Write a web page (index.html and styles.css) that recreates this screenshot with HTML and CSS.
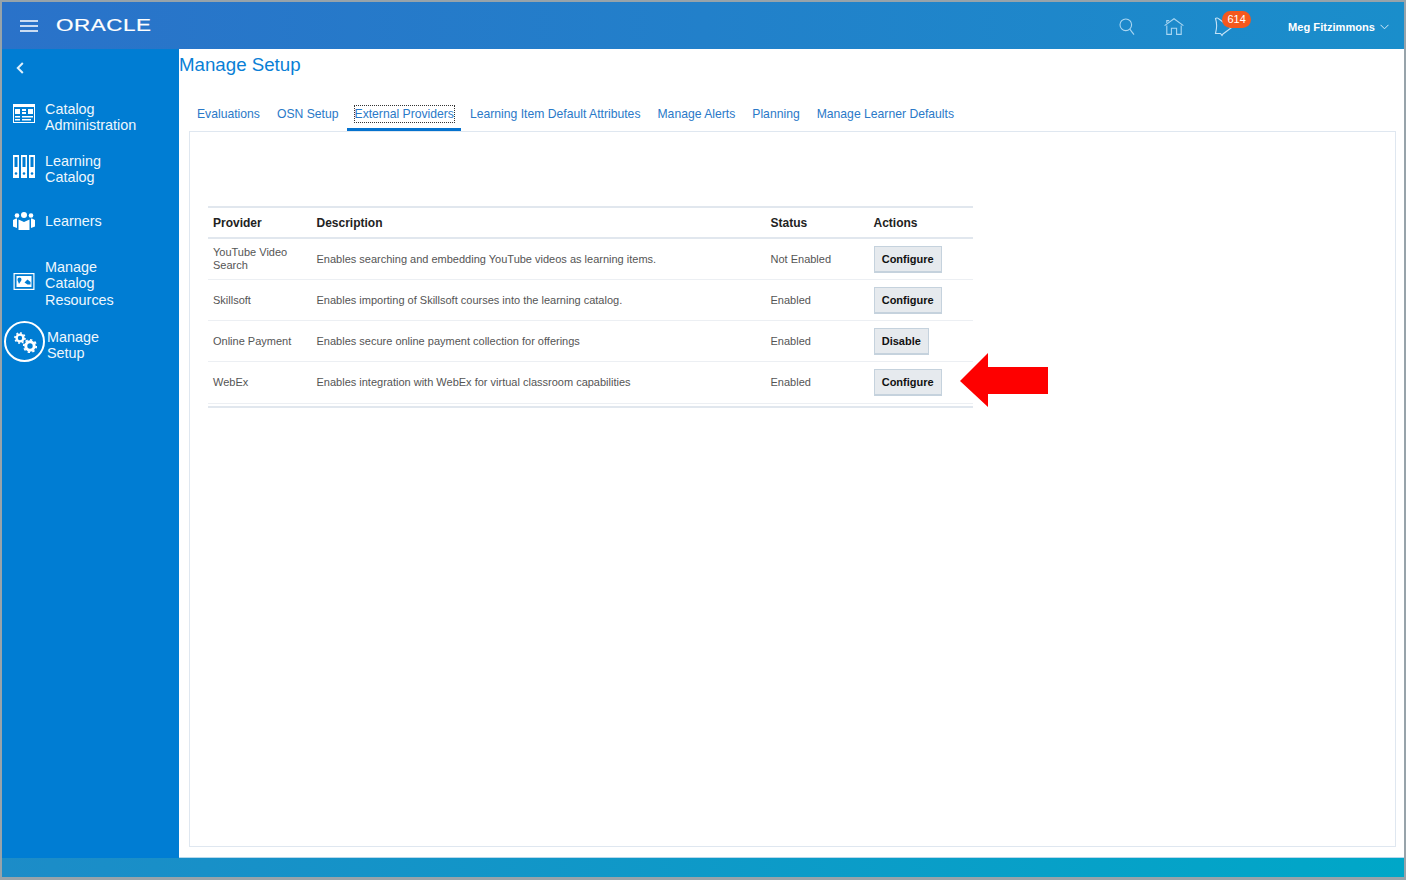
FILE: index.html
```html
<!DOCTYPE html>
<html lang="en">
<head>
<meta charset="utf-8">
<title>Manage Setup</title>
<link rel="stylesheet" href="styles.css">
</head>
<body>
<div class="frame">
  <header class="topbar">
    <svg class="hamburger" width="18" height="12" viewBox="0 0 18 12"><path d="M0 1h18M0 6h18M0 11h18" stroke="#fff" stroke-width="1.6" fill="none"/></svg>
    <span class="logo"><span class="logo-text">ORACLE</span></span>
    <div class="top-right">
      <svg class="ic-search" width="16" height="18" viewBox="0 0 16 18" fill="none" stroke="#a9d6f2" stroke-width="1.1"><circle cx="6.8" cy="6.8" r="5.8"/><path d="M10.8 11.2 15 16.6"/></svg>
      <svg class="ic-home" width="20" height="17" viewBox="0 0 20 17" fill="none" stroke="#a9d6f2" stroke-width="1.1"><path d="M.6 7.6 10 .8l9.4 6.8"/><path d="M2.8 7.5V16.4h4.6V10.2h5.2v6.2h4.6V7.5"/><path d="M2.8 5V2.6h2.4"/></svg>
      <span class="notif">
        <svg width="19" height="20" viewBox="0 0 19 20" fill="none" stroke="#c4e2f6" stroke-width="1.1"><path d="M1.500 1.500C2.500.5 4 1 5 2L17 11 9 17 8 18.500 6.500 16.500H1.500C3 11 3 6 1.500 1.500z"/></svg>
        <span class="badge">614</span>
      </span>
      <span class="user">Meg Fitzimmons</span>
      <svg class="ic-chev" width="9" height="6" viewBox="0 0 9 6" fill="none" stroke="#d5ebf8" stroke-width="1"><path d="M.5.8 4.500 4.800 8.500.8"/></svg>
    </div>
  </header>
  <div class="body-row">
    <nav class="sidebar">
      <svg class="back" width="8" height="12" viewBox="0 0 8 12" fill="none" stroke="#dff0fb" stroke-width="2"><path d="M6.800 1 1.800 6l5 5"/></svg>
      <a class="nav-item item-catalog">
        <svg class="nav-icon" width="22" height="19" viewBox="0 0 22 19"><rect x=".5" y=".5" width="21" height="18" fill="none" stroke="#fff"/><rect x="0" y="0" width="22" height="3" fill="#fff"/><g fill="#fff"><rect x="2" y="5" width="5" height="5"/><rect x="9" y="5" width="4" height="2"/><rect x="9" y="8" width="4" height="2"/><rect x="15" y="5" width="5" height="5"/><rect x="2" y="12" width="5" height="1.500"/><rect x="2" y="15" width="5" height="1.500"/><rect x="9" y="12" width="11" height="1.500"/><rect x="9" y="15" width="9" height="1.500"/></g></svg>
        <span>Catalog<br>Administration</span>
      </a>
      <a class="nav-item item-learning">
        <svg class="nav-icon" width="22" height="23" viewBox="0 0 22 23"><g fill="#fff"><path d="M0 0h6v23H0zM8 0h6v23H8zM16 0h6v23h-6z"/></g><g fill="#007dd3"><rect x="1.500" y="2" width="3" height="10"/><rect x="9.500" y="2" width="3" height="10"/><rect x="17.500" y="2" width="3" height="10"/><circle cx="3" cy="18.500" r="1.300"/><circle cx="11" cy="18.500" r="1.300"/><circle cx="19" cy="18.500" r="1.300"/></g></svg>
        <span>Learning<br>Catalog</span>
      </a>
      <a class="nav-item item-learners">
        <svg class="nav-icon" width="22" height="18" viewBox="0 0 22 18" fill="#fff"><circle cx="11" cy="3" r="3"/><circle cx="4" cy="3.500" r="2.300"/><circle cx="18" cy="3.500" r="2.300"/><path d="M5.500 7.500 11 10l5.500-2.500V18h-11z"/><path d="M0 8l3-1.500h1V16L0 14.500zM22 8l-3-1.500h-1V16l4-1.500z"/></svg>
        <span>Learners</span>
      </a>
      <a class="nav-item item-resources">
        <svg class="nav-icon" width="21" height="17" viewBox="0 0 21 17"><rect x=".6" y=".6" width="19.800" height="15.800" fill="none" stroke="#fff" stroke-width="1.200"/><rect x="3" y="3" width="15" height="11" fill="#fff"/><path d="M4 6.500a2 2 0 1 1 4 0c0 1.500-1.500 2.500-2.500 4.500-.3-1.500-1.500-3-1.500-4.500zM11 9.500l3-3 3 2.500v2.500l-3 0z" fill="#007dd3"/></svg>
        <span>Manage<br>Catalog<br>Resources</span>
      </a>
      <a class="nav-item item-setup">
        <span class="setup-ring">
          <svg width="24" height="24" viewBox="0 0 24 24" fill="none" stroke="#fff"><circle cx="7" cy="8" r="3.400" stroke-width="2.400"/><circle cx="7" cy="8" r="5" stroke-width="1.600" pathLength="16" stroke-dasharray="1 1"/><circle cx="17" cy="16" r="4.200" stroke-width="3"/><circle cx="17" cy="16" r="6.200" stroke-width="1.800" pathLength="16" stroke-dasharray="1 1"/></svg>
        </span>
        <span class="setup-label">Manage<br>Setup</span>
      </a>
    </nav>
    <main class="content">
      <h1 class="page-title">Manage Setup</h1>
      <div class="tabs">
        <a class="tab">Evaluations</a>
        <a class="tab">OSN Setup</a>
        <a class="tab tab-active"><span class="focus">External Providers</span></a>
        <a class="tab">Learning Item Default Attributes</a>
        <a class="tab">Manage Alerts</a>
        <a class="tab">Planning</a>
        <a class="tab">Manage Learner Defaults</a>
      </div>
      <section class="panel">
        <div class="table-wrap">
          <table class="providers">
            <thead>
              <tr><th class="c1">Provider</th><th class="c2">Description</th><th class="c3">Status</th><th class="c4">Actions</th></tr>
            </thead>
            <tbody>
              <tr class="r1"><td>YouTube Video Search</td><td>Enables searching and embedding YouTube videos as learning items.</td><td>Not Enabled</td><td><button class="btn">Configure</button></td></tr>
              <tr class="r2"><td>Skillsoft</td><td>Enables importing of Skillsoft courses into the learning catalog.</td><td>Enabled</td><td><button class="btn">Configure</button></td></tr>
              <tr class="r2"><td>Online Payment</td><td>Enables secure online payment collection for offerings</td><td>Enabled</td><td><button class="btn">Disable</button></td></tr>
              <tr class="r1"><td>WebEx</td><td>Enables integration with WebEx for virtual classroom capabilities</td><td>Enabled</td><td><button class="btn">Configure</button></td></tr>
            </tbody>
          </table>
          <div class="table-end"></div>
          <svg class="arrow" width="88" height="54" viewBox="0 0 88 54"><path d="M0 28 28 0v14h60v27H28v13z" fill="#fe0000"/></svg>
        </div>
      </section>
    </main>
  </div>
  <footer class="bottombar"></footer>
</div>
</body>
</html>
```

FILE: styles.css
```css
* { box-sizing: border-box; }
html, body { margin: 0; padding: 0; }
body {
  width: 1406px;
  height: 880px;
  overflow: hidden;
  background: #fff;
  font-family: "Liberation Sans", Arial, sans-serif;
}
.frame {
  width: 1406px;
  height: 880px;
  border: 2px solid #97a3aa;
  border-bottom-width: 3px;
  display: flex;
  flex-direction: column;
}
.topbar {
  height: 47px;
  flex: none;
  display: flex;
  align-items: center;
  padding-left: 18px;
  background: linear-gradient(90deg, #2a72c9 0%, #1a8ecb 100%);
}
.hamburger { flex: none; }
.logo {
  width: 96px;
  margin-left: 18px;
  height: 20px;
  display: block;
  overflow: visible;
}
.logo-text {
  display: inline-block;
  font-size: 17px;
  line-height: 20px;
  color: #fff;
  letter-spacing: .4px;
  -webkit-text-stroke: .2px #fff;
  transform: scaleX(1.32);
  transform-origin: 0 50%;
}
.top-right {
  margin-left: auto;
  display: flex;
  align-items: center;
  padding-right: 15px;
}
.ic-search { margin-top: 2px; }
.ic-home { margin-left: 29px; margin-top: 2px; }
.notif {
  position: relative;
  display: block;
  width: 19px;
  height: 20px;
  margin-left: 30px;
  margin-top: 3px;
}
.notif svg { display: block; }
.badge {
  position: absolute;
  left: 8px;
  top: -6px;
  width: 29px;
  height: 17px;
  border-radius: 9px;
  background: #f4581e;
  color: #fff;
  font-size: 11px;
  line-height: 16px;
  text-align: center;
}
.user {
  margin-left: 55px;
  color: #fff;
  font-size: 11.100px;
  font-weight: 700;
  margin-top: 3px;
}
.ic-chev { margin-left: 5px; margin-top: 2px; }
.body-row { flex: 1; display: flex; min-height: 0; }
.sidebar {
  width: 177px;
  flex: none;
  background: #007dd3;
  color: #fff;
  padding-top: 13px;
}
.back { display: block; margin-left: 14px; }
.nav-item {
  display: flex;
  align-items: center;
  gap: 10px;
  padding-left: 11px;
  font-size: 14.400px;
  line-height: 16.300px;
  color: #eef7fd;
}
.nav-icon { flex: none; width: 22px; }
.item-catalog { margin-top: 27px; }
.item-catalog .nav-icon { margin-bottom: 8px; }
.item-learning { margin-top: 19px; }
.item-learning .nav-icon { margin-bottom: 5px; }
.item-learners { margin-top: 27px; }
.item-resources { margin-top: 29px; }
.item-resources .nav-icon { margin-bottom: 5px; }
.item-setup { margin-top: 13px; padding-left: 2px; gap: 2px; }
.setup-label { padding-top: 7px; }
.setup-ring {
  width: 41px;
  height: 41px;
  flex: none;
  border: 2px solid #fff;
  border-radius: 50%;
  display: flex;
  align-items: center;
  justify-content: center;
}
.content {
  flex: 1;
  min-width: 0;
  display: flex;
  flex-direction: column;
  padding: 0 8px 10px 0;
  background: #fff;
  border-bottom: 1px solid #b7d9ec;
}
.page-title {
  margin: 0;
  padding-top: 5px;
  height: 47px;
  font-size: 18.700px;
  line-height: 22px;
  font-weight: 400;
  color: #0a7fd6;
}
.tabs {
  display: flex;
  gap: 0;
  height: 35px;
  padding-left: 9.500px;
  font-size: 12.180px;
}
.tab {
  padding: 10px 8.500px 0;
  height: 35px;
  line-height: 16px;
  color: #2a79c8;
}
.tab-active { border-bottom: 3px solid #0572ce; padding: 10px 7.500px 0; }
.focus { outline: 1px dotted #333; display: block; }
.panel {
  flex: 1;
  margin-left: 9.500px;
  border: 1.500px solid #dfe7f0;
  padding: 74px 0 0 18.500px;
}
.table-wrap { position: relative; width: 765px; }
.providers {
  width: 765px;
  table-layout: fixed;
  border-collapse: collapse;
  font-size: 11px;
  color: #555;
  border-top: 2px solid #e1e7ee;
}
.providers th {
  height: 31px;
  text-align: left;
  font-size: 12px;
  font-weight: 700;
  color: #222;
  padding: 0 0 0 4.500px;
  border-bottom: 2px solid #e1e7ee;
}
.c1 { width: 104px; }
.c2 { width: 454px; }
.c3 { width: 103px; }
.providers td {
  padding: 0 0 0 4.500px;
  border-bottom: 1px solid #eceff3;
  line-height: 13px;
}
.providers td:first-child, .providers th:first-child { padding-left: 5px; }
.r1 td { height: 41.500px; }
.r2 td { height: 41px; }
.btn {
  width: auto;
  height: 27px;
  padding: 0 7.200px;
  background: #e6eaee;
  border: 1px solid #c5d2dd;
  border-bottom-width: 2px;
  color: #111;
  font-family: "Liberation Sans", Arial, sans-serif;
  font-size: 11px;
  font-weight: 700;
  display: block;
}
.table-end { height: 2px; margin-top: 2px; background: #e1e7ee; }
.arrow { position: absolute; left: 752px; top: 147px; }
.bottombar {
  height: 19px;
  flex: none;
  background: linear-gradient(90deg, #1c8cc8 0%, #00a7c8 100%);
}
```
